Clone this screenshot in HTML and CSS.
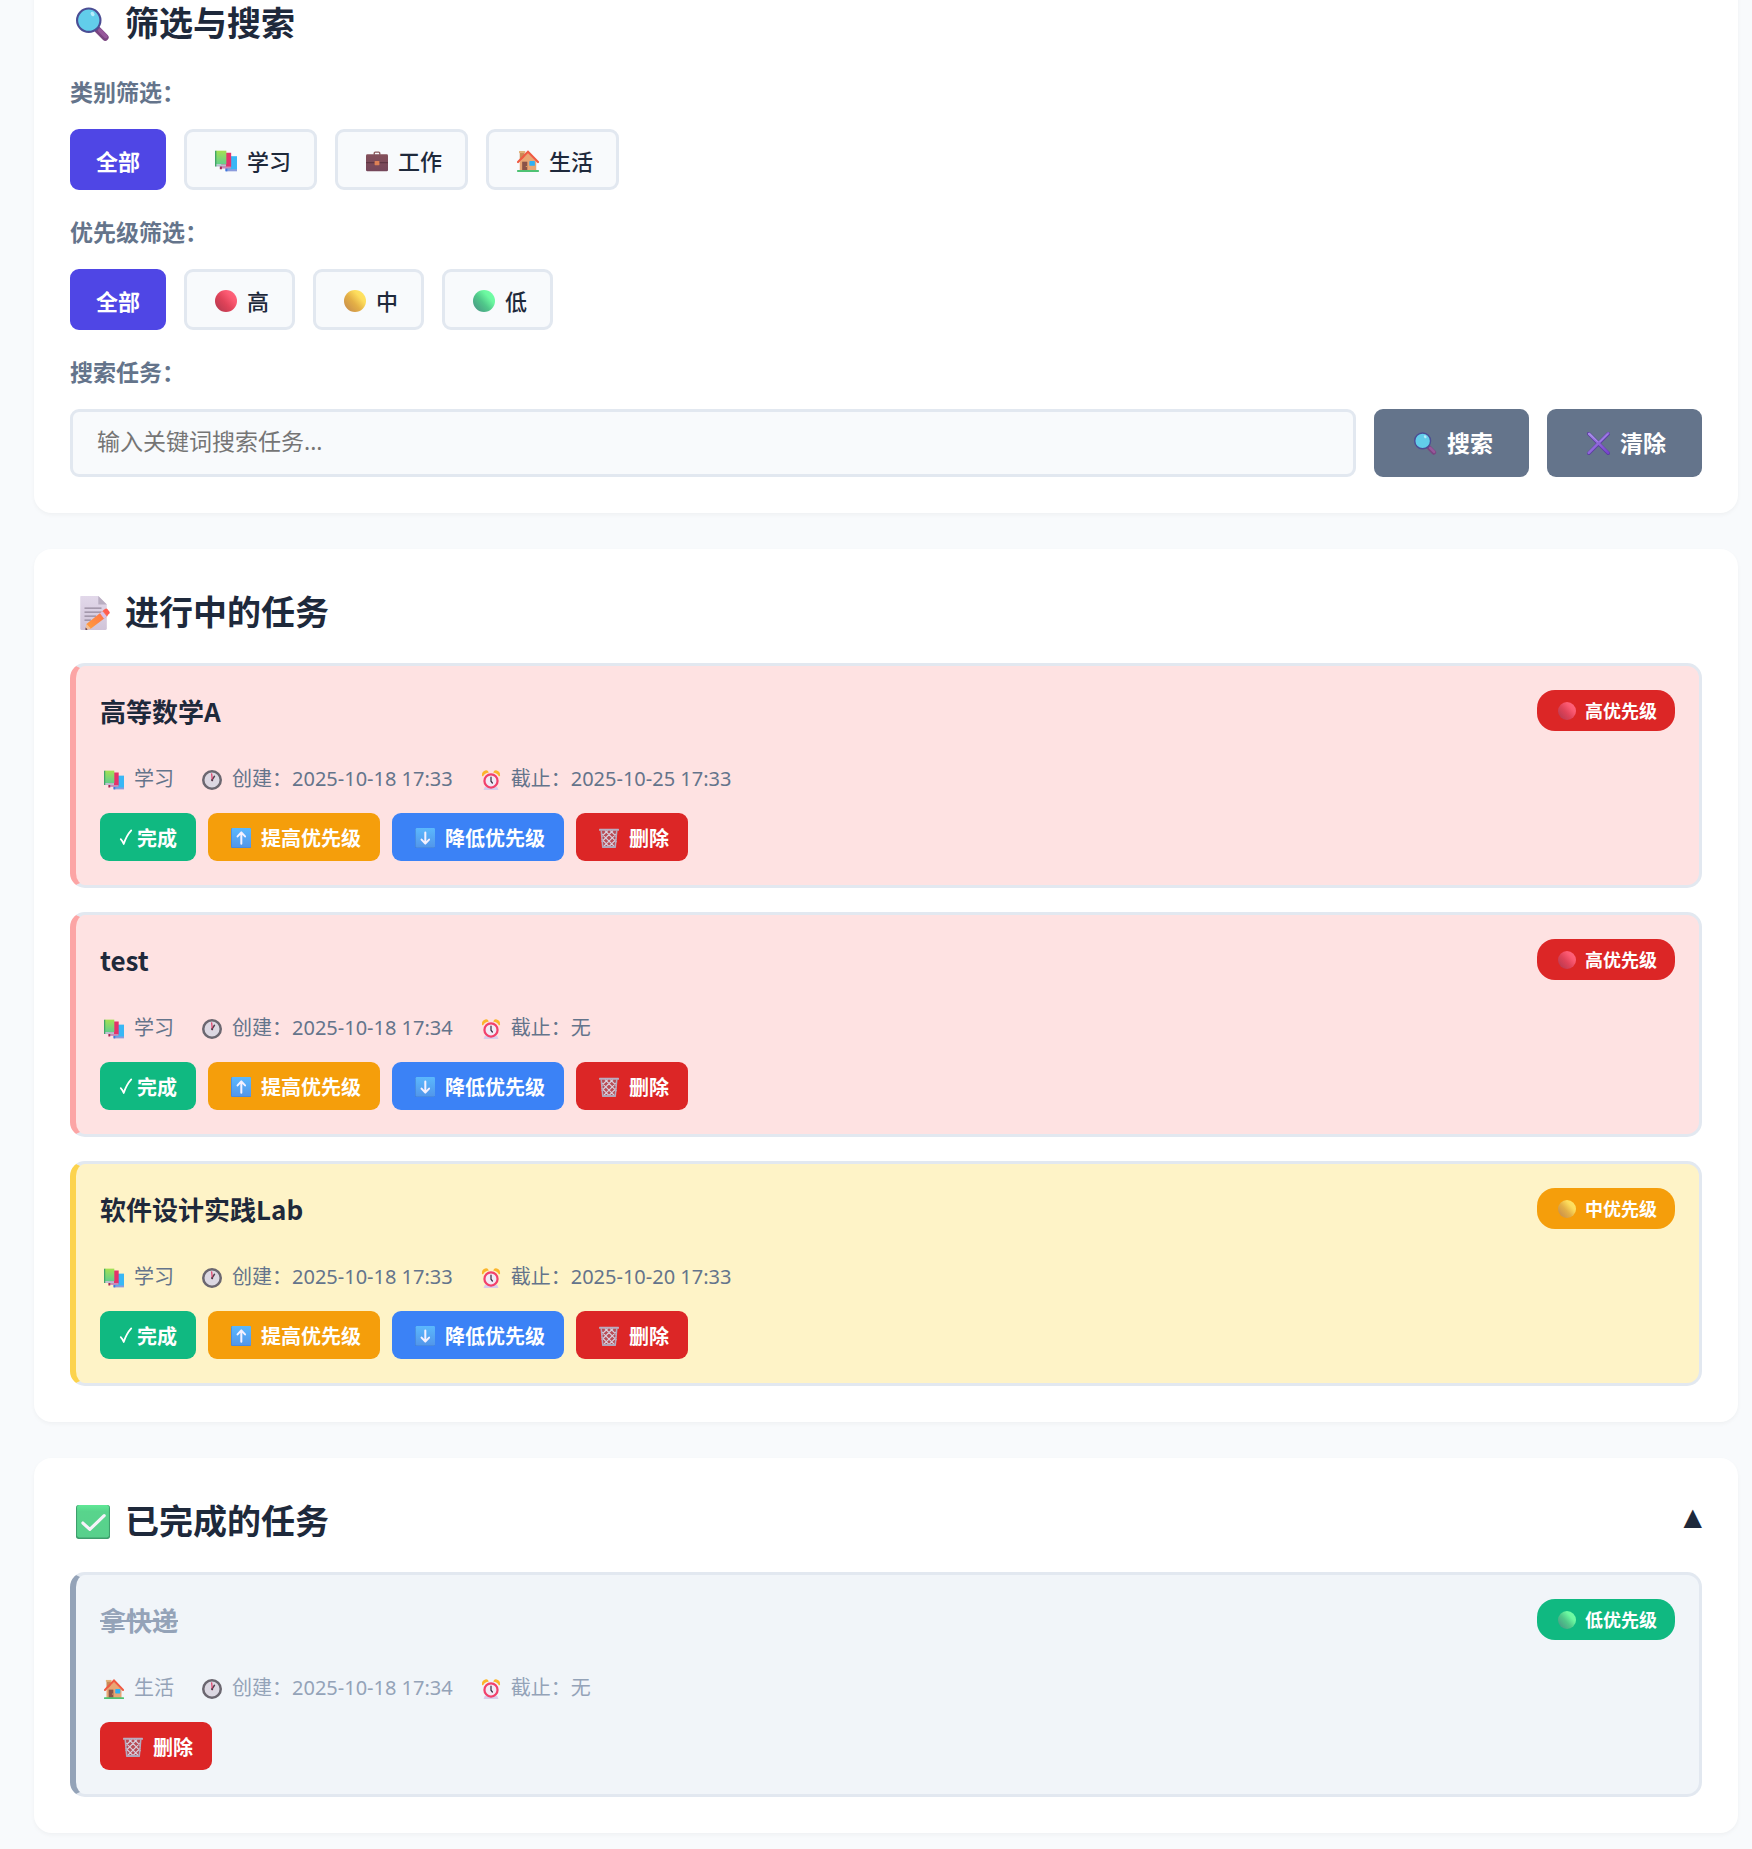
FILE: index.html
```html
<!DOCTYPE html>
<html lang="zh-CN">
<head>
<meta charset="utf-8">
<meta name="viewport" content="width=device-width, initial-scale=1">
<title>任务管理</title>
<link rel="stylesheet" href="styles.css">
</head>
<body>
<svg class="sprite" aria-hidden="true">
  <defs>
    <linearGradient id="g-red" x1="1" y1="0.1" x2="0.1" y2="0.9"><stop offset="0" stop-color="#ff6a82"/><stop offset="0.3" stop-color="#fb5a72"/><stop offset="0.6" stop-color="#e04359"/><stop offset="1" stop-color="#b83a50"/></linearGradient>
    <linearGradient id="g-yellow" x1="1" y1="0.1" x2="0.1" y2="0.9"><stop offset="0" stop-color="#ffe869"/><stop offset="0.3" stop-color="#fddc5c"/><stop offset="0.6" stop-color="#e4b046"/><stop offset="1" stop-color="#c98f4c"/></linearGradient>
    <linearGradient id="g-green" x1="1" y1="0.1" x2="0.1" y2="0.9"><stop offset="0" stop-color="#74ffa8"/><stop offset="0.3" stop-color="#6cf8a0"/><stop offset="0.6" stop-color="#50c88a"/><stop offset="1" stop-color="#4a9a86"/></linearGradient>
    <linearGradient id="g-book" x1="0" y1="0" x2="0" y2="1"><stop offset="0" stop-color="#a5e052"/><stop offset="1" stop-color="#62cf8c"/></linearGradient>
    <linearGradient id="g-blue" x1="0" y1="0" x2="0" y2="1"><stop offset="0" stop-color="#5bb8fd"/><stop offset="1" stop-color="#5296ea"/></linearGradient>
    <linearGradient id="g-check" x1="0" y1="0" x2="0" y2="1"><stop offset="0" stop-color="#5fe896"/><stop offset="0.2" stop-color="#58d48c"/><stop offset="1" stop-color="#58d08c"/></linearGradient>
    <linearGradient id="g-pencil" x1="0" y1="1" x2="1" y2="0"><stop offset="0" stop-color="#ffa03c"/><stop offset="1" stop-color="#ff6a4a"/></linearGradient>
    <linearGradient id="g-paper" x1="0" y1="0" x2="0" y2="1"><stop offset="0" stop-color="#e2d8ea"/><stop offset="1" stop-color="#d0c4d8"/></linearGradient>
    <linearGradient id="g-cross" x1="0" y1="0" x2="1" y2="1"><stop offset="0" stop-color="#a78be8"/><stop offset="1" stop-color="#7743cc"/></linearGradient>
    <linearGradient id="g-case" x1="0" y1="0" x2="0" y2="1"><stop offset="0" stop-color="#84505a"/><stop offset="1" stop-color="#74465a"/></linearGradient>
  </defs>
  <symbol id="i-search" viewBox="0 0 32 32">
    <path d="M20.5 21.5l7 7" stroke="#7a4580" stroke-width="6.4" stroke-linecap="round"/>
    <path d="M22.5 22l5.5 5.6" stroke="#97589b" stroke-width="3.6" stroke-linecap="round"/>
    <circle cx="12" cy="12.4" r="11" fill="#62cdea" stroke="#4b4d94" stroke-width="2"/>
    <ellipse cx="15.6" cy="6.6" rx="1.7" ry="2.2" fill="#b5ecfb" transform="rotate(-35 15.6 6.6)"/>
  </symbol>
  <symbol id="i-books" viewBox="0 0 32 32">
    <path fill="#38b7f5" d="M17 9h15v20H17z"/><path fill="#8b9bdc" d="M16 28h16v3H16z"/><path fill="#3f78dd" d="M15 26h3v5h-3z"/>
    <path fill="#e5326b" d="M9 4h14.500v21H9z"/><path fill="#c98bb8" d="M8 24h15v3H8z"/><path fill="#a92656" d="M7 22h3v6H7z"/>
    <path fill="url(#g-book)" d="M1 1h15.500v20H1z"/><path fill="#b9bfd0" d="M1 21h15v3H1z"/><path fill="#41a567" d="M0 1h2v23H0z"/>
  </symbol>
  <symbol id="i-case" viewBox="0 0 32 32">
    <path d="M12 7V4.500Q12 3 13.500 3h5Q20 3 20 4.500V7" fill="none" stroke="#8a5a5c" stroke-width="2"/>
    <rect y="6" width="32" height="25" rx="2" fill="url(#g-case)"/>
    <path d="M0 18.500h32" stroke="#562f3e" stroke-width="1.400"/>
    <rect x="12.500" y="16" width="7" height="6" rx="1" fill="#dd8055"/>
  </symbol>
  <symbol id="i-house" viewBox="0 0 32 32">
    <path fill="#c98a55" d="M4 2h7v12H4z"/><path fill="#e2b27a" d="M3 1.500h9v3H3z"/>
    <path fill="#e9a673" d="M16 4l12 13v14H4V17z"/>
    <path d="M1.500 17.500L16 2.500l14.500 15" fill="none" stroke="#ef5a42" stroke-width="3.200" stroke-linecap="round"/>
    <path fill="#8a5348" d="M7.500 17H15v13H7.500z"/><circle cx="13.500" cy="24" r=".8" fill="#f3c46c"/>
    <rect x="18" y="16" width="8" height="7" rx="1" fill="#2fb0f4"/>
    <rect y="29" width="32" height="3" rx="1" fill="#4ec273"/>
  </symbol>
  <symbol id="i-red" viewBox="0 0 32 32"><circle cx="16" cy="16" r="16" fill="url(#g-red)"/></symbol>
  <symbol id="i-yellow" viewBox="0 0 32 32"><circle cx="16" cy="16" r="16" fill="url(#g-yellow)"/></symbol>
  <symbol id="i-green" viewBox="0 0 32 32"><circle cx="16" cy="16" r="16" fill="url(#g-green)"/></symbol>
  <symbol id="i-cross" viewBox="0 0 32 32">
    <path d="M2.500 2.500l27 27M29.500 2.500l-27 27" stroke="#5b3aa0" stroke-width="5" stroke-linecap="round"/>
    <path d="M3 2.500l26.500 26.500M29.500 2l-27 27" stroke="url(#g-cross)" stroke-width="3.600" stroke-linecap="round"/>
    <path d="M4 2.500l11 11M29 2.500l-11 11" stroke="#b39af0" stroke-width="1"/>
  </symbol>
  <symbol id="i-memo" viewBox="0 0 32 32">
    <path fill="url(#g-paper)" d="M4.500 0H21l8 8v22.500q0 1.500-1.500 1.500h-22Q4 32 4 30.500V1q0-1 .5-1z"/>
    <path fill="#b9aec2" d="M21 0l8 8h-8z"/>
    <path d="M8 11.500h16M8 15.200h16M8 19h11M8 22.700h6" stroke="#93879b" stroke-width="1.200"/>
    <path fill="url(#g-pencil)" d="M9.500 26.500L26 13.500l4 5L13.500 31z"/>
    <path fill="#d9c2e8" d="M22.500 16.300l2.600-2 4 5-2.700 2z"/><path fill="#ff5c50" d="M25.500 13.500l2.200-1.600q1-.6 1.800.4l2 2.500q.7 1-.2 1.800l-2 1.700z"/>
    <path fill="#f3bf96" d="M9.700 26l4.300 4.500-5 1.500z"/><path fill="#4a2a3c" d="M9 29.700l1.900 1.800L9 32z"/>
  </symbol>
  <symbol id="i-done" viewBox="0 0 32 32">
    <rect width="32" height="32" rx="2.500" fill="#3e9e6c"/><rect x="1" width="30" height="30.500" rx="2" fill="url(#g-check)"/>
    <path d="M6.500 17l6.500 6 13.500-13" fill="none" stroke="#f6f2fa" stroke-width="3" stroke-linecap="round" stroke-linejoin="round"/>
  </symbol>
  <symbol id="i-clock" viewBox="0 0 32 32">
    <circle cx="16" cy="16" r="14" fill="#dcd8e2" stroke="#6b6770" stroke-width="4"/>
    <path d="M16 16L20 10" stroke="#50404f" stroke-width="2.200" stroke-linecap="round"/>
    <path d="M16.500 17L15.500 6" stroke="#e0325e" stroke-width="1.800" stroke-linecap="round"/>
    <circle cx="16.300" cy="16.500" r="1.600" fill="#4a3f4d"/>
  </symbol>
  <symbol id="i-alarm" viewBox="0 0 32 32">
    <path fill="#d8cdea" d="M6 27h20l2 5H4z"/>
    <circle cx="16" cy="17.500" r="10.500" fill="#f2eaf6" stroke="#f2416c" stroke-width="3.600"/>
    <path fill="#fbb52c" d="M1.500 9Q1 2 8 .5q3-.3 4.500 3.500Q6 5 3.500 10q-1.800 0-2-1z"/>
    <path fill="#fbb52c" d="M30.500 9Q31 2 24 .5q-3-.3-4.500 3.500Q26 5 28.500 10q1.800 0 2-1z"/>
    <path d="M16 11.500v6.500l2.200 2.800" fill="none" stroke="#3d3244" stroke-width="2" stroke-linecap="round"/>
  </symbol>
  <symbol id="i-up" viewBox="0 0 32 32">
    <rect width="32" height="32" rx="2.500" fill="#3f7fd6"/><rect x="1" width="31" height="31" rx="2" fill="url(#g-blue)"/>
    <path d="M16.500 25V8M10.500 13.500l6-6.500 6 6.500" fill="none" stroke="#f5f1ff" stroke-width="3.200" stroke-linecap="round" stroke-linejoin="round"/>
  </symbol>
  <symbol id="i-down" viewBox="0 0 32 32">
    <rect width="32" height="32" rx="2.500" fill="#3f7fd6"/><rect x="1" width="31" height="31" rx="2" fill="url(#g-blue)"/>
    <path d="M16.500 7v17M10.500 18.500l6 6.500 6-6.500" fill="none" stroke="#f5f1ff" stroke-width="3.200" stroke-linecap="round" stroke-linejoin="round"/>
  </symbol>
  <symbol id="i-trash" viewBox="0 0 32 32">
    <path d="M3 3.500h26L26.500 31h-21z" fill="#8c7f92" fill-opacity=".45"/>
    <path d="M4 9l21 21M9.500 4L28 22.500M18 4l10.500 10.500M4.500 18l12.500 12.500M28 9L7 30M22.500 4L4.500 22M14 4L4 14M27.500 18L15 30.500" stroke="#d8d0de" stroke-width="1.700"/>
    <path d="M3.500 4L6 30.500M28.500 4L26 30.500" stroke="#b4a8bc" stroke-width="2.400"/>
    <rect y="1" width="32" height="3.400" rx="1" fill="#b9aec2"/><rect x="5" y="28.800" width="22" height="3.200" rx="1" fill="#b1a6ba"/>
  </symbol>
  <symbol id="i-tick" viewBox="0 0 16 20">
    <path d="M2 12.500Q4 14.500 5.400 18 8.500 8.500 14 2.500" fill="none" stroke="#fff" stroke-width="2" stroke-linecap="round" stroke-linejoin="round"/>
  </symbol>
</svg>

<main class="page">
  <section class="card">
    <h2 class="card-title"><svg class="icon" aria-hidden="true"><use href="#i-search"/></svg>筛选与搜索</h2>

    <div class="filter-group" role="group" aria-labelledby="category-label">
      <div class="filter-label" id="category-label">类别筛选：</div>
      <div class="filter-row">
        <button type="button" class="filter-btn active">全部</button>
        <button type="button" class="filter-btn"><svg class="icon" aria-hidden="true"><use href="#i-books"/></svg>学习</button>
        <button type="button" class="filter-btn"><svg class="icon" aria-hidden="true"><use href="#i-case"/></svg>工作</button>
        <button type="button" class="filter-btn"><svg class="icon" aria-hidden="true"><use href="#i-house"/></svg>生活</button>
      </div>
    </div>

    <div class="filter-group" role="group" aria-labelledby="priority-label">
      <div class="filter-label" id="priority-label">优先级筛选：</div>
      <div class="filter-row">
        <button type="button" class="filter-btn active">全部</button>
        <button type="button" class="filter-btn"><svg class="icon" aria-hidden="true"><use href="#i-red"/></svg>高</button>
        <button type="button" class="filter-btn"><svg class="icon" aria-hidden="true"><use href="#i-yellow"/></svg>中</button>
        <button type="button" class="filter-btn"><svg class="icon" aria-hidden="true"><use href="#i-green"/></svg>低</button>
      </div>
    </div>

    <div class="filter-group">
      <label class="filter-label" for="search">搜索任务：</label>
      <div class="filter-row">
        <input class="search-input" id="search" type="text" placeholder="输入关键词搜索任务...">
        <button type="button" class="search-btn"><svg class="icon" aria-hidden="true"><use href="#i-search"/></svg>搜索</button>
        <button type="button" class="search-btn"><svg class="icon" aria-hidden="true"><use href="#i-cross"/></svg>清除</button>
      </div>
    </div>
  </section>

  <section class="card">
    <h2 class="card-title"><svg class="icon" aria-hidden="true"><use href="#i-memo"/></svg>进行中的任务</h2>
    <div class="task-list">
      <article class="task task-high">
        <div class="task-head">
          <h3 class="task-title">高等数学A</h3>
          <span class="badge badge-high"><svg class="icon" aria-hidden="true"><use href="#i-red"/></svg>高优先级</span>
        </div>
        <div class="task-meta">
          <span class="meta-item"><svg class="icon" aria-hidden="true"><use href="#i-books"/></svg>学习</span>
          <span class="meta-item"><svg class="icon" aria-hidden="true"><use href="#i-clock"/></svg>创建：2025-10-18 17:33</span>
          <span class="meta-item"><svg class="icon" aria-hidden="true"><use href="#i-alarm"/></svg>截止：2025-10-25 17:33</span>
        </div>
        <div class="task-actions">
          <button type="button" class="action complete"><svg class="tick" aria-hidden="true"><use href="#i-tick"/></svg>完成</button>
          <button type="button" class="action raise"><svg class="icon" aria-hidden="true"><use href="#i-up"/></svg>提高优先级</button>
          <button type="button" class="action lower"><svg class="icon" aria-hidden="true"><use href="#i-down"/></svg>降低优先级</button>
          <button type="button" class="action delete"><svg class="icon" aria-hidden="true"><use href="#i-trash"/></svg>删除</button>
        </div>
      </article>

      <article class="task task-high">
        <div class="task-head">
          <h3 class="task-title">test</h3>
          <span class="badge badge-high"><svg class="icon" aria-hidden="true"><use href="#i-red"/></svg>高优先级</span>
        </div>
        <div class="task-meta">
          <span class="meta-item"><svg class="icon" aria-hidden="true"><use href="#i-books"/></svg>学习</span>
          <span class="meta-item"><svg class="icon" aria-hidden="true"><use href="#i-clock"/></svg>创建：2025-10-18 17:34</span>
          <span class="meta-item"><svg class="icon" aria-hidden="true"><use href="#i-alarm"/></svg>截止：无</span>
        </div>
        <div class="task-actions">
          <button type="button" class="action complete"><svg class="tick" aria-hidden="true"><use href="#i-tick"/></svg>完成</button>
          <button type="button" class="action raise"><svg class="icon" aria-hidden="true"><use href="#i-up"/></svg>提高优先级</button>
          <button type="button" class="action lower"><svg class="icon" aria-hidden="true"><use href="#i-down"/></svg>降低优先级</button>
          <button type="button" class="action delete"><svg class="icon" aria-hidden="true"><use href="#i-trash"/></svg>删除</button>
        </div>
      </article>

      <article class="task task-medium">
        <div class="task-head">
          <h3 class="task-title">软件设计实践Lab</h3>
          <span class="badge badge-medium"><svg class="icon" aria-hidden="true"><use href="#i-yellow"/></svg>中优先级</span>
        </div>
        <div class="task-meta">
          <span class="meta-item"><svg class="icon" aria-hidden="true"><use href="#i-books"/></svg>学习</span>
          <span class="meta-item"><svg class="icon" aria-hidden="true"><use href="#i-clock"/></svg>创建：2025-10-18 17:33</span>
          <span class="meta-item"><svg class="icon" aria-hidden="true"><use href="#i-alarm"/></svg>截止：2025-10-20 17:33</span>
        </div>
        <div class="task-actions">
          <button type="button" class="action complete"><svg class="tick" aria-hidden="true"><use href="#i-tick"/></svg>完成</button>
          <button type="button" class="action raise"><svg class="icon" aria-hidden="true"><use href="#i-up"/></svg>提高优先级</button>
          <button type="button" class="action lower"><svg class="icon" aria-hidden="true"><use href="#i-down"/></svg>降低优先级</button>
          <button type="button" class="action delete"><svg class="icon" aria-hidden="true"><use href="#i-trash"/></svg>删除</button>
        </div>
      </article>
    </div>
  </section>

  <section class="card">
    <div class="card-head">
      <h2 class="card-title"><svg class="icon" aria-hidden="true"><use href="#i-done"/></svg>已完成的任务</h2>
      <button type="button" class="toggle" aria-expanded="true">▲</button>
    </div>
    <div class="task-list">
      <article class="task task-done">
        <div class="task-head">
          <h3 class="task-title">拿快递</h3>
          <span class="badge badge-low"><svg class="icon" aria-hidden="true"><use href="#i-green"/></svg>低优先级</span>
        </div>
        <div class="task-meta">
          <span class="meta-item"><svg class="icon" aria-hidden="true"><use href="#i-house"/></svg>生活</span>
          <span class="meta-item"><svg class="icon" aria-hidden="true"><use href="#i-clock"/></svg>创建：2025-10-18 17:34</span>
          <span class="meta-item"><svg class="icon" aria-hidden="true"><use href="#i-alarm"/></svg>截止：无</span>
        </div>
        <div class="task-actions">
          <button type="button" class="action delete"><svg class="icon" aria-hidden="true"><use href="#i-trash"/></svg>删除</button>
        </div>
      </article>
    </div>
  </section>
</main>
</body>
</html>
```
FILE: styles.css
```css
* {
  box-sizing: border-box;
  margin: 0;
  padding: 0;
}

body {
  background: #f8fafc;
  color: #1e293b;
  font-family: "Noto Sans", "Noto Sans CJK SC", sans-serif;
  font-size: 20px;
}

button,
input {
  font-family: inherit;
}

button {
  border: 0;
  cursor: pointer;
}

/* Kept rendered at zero size so that the gradients stay usable. */
.sprite {
  position: absolute;
  width: 0;
  height: 0;
}

.icon {
  flex: none;
  width: 20px;
  height: 20px;
  margin: 2px 10px 0 4px;
}

.page {
  display: flex;
  flex-direction: column;
  gap: 36px;
  margin-top: -40px;
  padding: 0 14px 17px 34px;
}

.card {
  padding: 36px;
  border-radius: 18px;
  background: #fff;
  box-shadow: 0 2px 4px rgba(0, 0, 0, 0.04);
}

.card-title {
  display: flex;
  align-items: center;
  margin-bottom: 24px;
  font-size: 34px;
  font-weight: 600;
  line-height: 54px;
}

.card-title .icon {
  width: 34px;
  height: 34px;
  margin: 2px 15px 0 6px;
}

.card-head {
  display: flex;
  justify-content: space-between;
  align-items: flex-start;
}

.toggle {
  background: none;
  color: #1e293b;
  font-family: "DejaVu Sans", sans-serif;
  font-size: 24px;
  line-height: 46px;
}

/* Filters */
.filter-group + .filter-group {
  margin-top: 24px;
}

.filter-label {
  display: block;
  margin-bottom: 18px;
  color: #64748b;
  font-size: 23px;
  font-weight: 600;
  line-height: 37px;
}

.filter-row {
  display: flex;
  gap: 18px;
}

.filter-btn {
  display: flex;
  align-items: center;
  height: 61px;
  padding: 0 23px;
  border: 3px solid #e2e8f0;
  border-radius: 9px;
  background: #f8fafc;
  color: #1e293b;
  font-size: 22px;
  font-weight: 500;
}

.filter-btn.active {
  border-color: #4f46e5;
  background: #4f46e5;
  color: #fff;
  font-weight: 600;
}

.filter-btn .icon {
  width: 22px;
  height: 22px;
  margin-left: 5px;
}

.search-input {
  flex: 1;
  min-width: 0;
  height: 68px;
  padding: 0 24px 4px;
  border: 3px solid #e2e8f0;
  border-radius: 9px;
  background: #f8fafc;
  color: #1e293b;
  font-size: 23px;
}

.search-input::placeholder {
  color: #757575;
}

.search-btn {
  display: flex;
  align-items: center;
  padding: 0 36px 2px;
  border-radius: 9px;
  background: #64748b;
  color: #fff;
  font-size: 23px;
  font-weight: 600;
}

.search-btn .icon {
  width: 23px;
  height: 23px;
}

/* Tasks */
.task-list {
  display: flex;
  flex-direction: column;
  gap: 24px;
}

.task {
  padding: 24px;
  border: 3px solid #e2e8f0;
  border-left-width: 6px;
  border-radius: 15px;
}

.task-high {
  border-left-color: #fca5a5;
  background: #fee2e2;
}

.task-medium {
  border-left-color: #fcd34d;
  background: #fef3c7;
}

.task-done {
  border-left-color: #94a3b8;
  background: #f1f5f9;
}

.task-head {
  display: flex;
  justify-content: space-between;
  align-items: flex-start;
  margin-bottom: 30px;
}

.task-title {
  font-family: "Noto Sans CJK SC", sans-serif;
  font-size: 26px;
  font-weight: 600;
  line-height: 42px;
}

.task-done .task-title {
  color: #94a3b8;
  text-decoration: line-through;
}

.badge {
  display: flex;
  align-items: center;
  height: 41px;
  padding: 0 18px 2px;
  border-radius: 18px;
  color: #fff;
  font-size: 18px;
  font-weight: 600;
}

.badge .icon {
  width: 18px;
  height: 18px;
  margin: 2px 9px 0 3px;
}

.badge-high {
  background: #dc2626;
}

.badge-medium {
  background: #f59e0b;
}

.badge-low {
  background: #10b981;
}

.task-meta {
  display: flex;
  flex-wrap: wrap;
  gap: 24px;
  margin-bottom: 18px;
  color: #64748b;
  line-height: 33px;
}

.task-done .task-meta {
  color: #94a3b8;
}

.meta-item {
  display: flex;
  align-items: center;
}

.task-actions {
  display: flex;
  flex-wrap: wrap;
  gap: 12px;
}

.action {
  display: flex;
  align-items: center;
  height: 48px;
  padding: 0 19px;
  border-radius: 9px;
  color: #fff;
  font-size: 20px;
  font-weight: 600;
}

.tick {
  width: 14px;
  height: 18px;
  margin-right: 4px;
}

.complete {
  background: #10b981;
}

.raise {
  background: #f59e0b;
}

.lower {
  background: #3b82f6;
}

.delete {
  background: #dc2626;
}
```
